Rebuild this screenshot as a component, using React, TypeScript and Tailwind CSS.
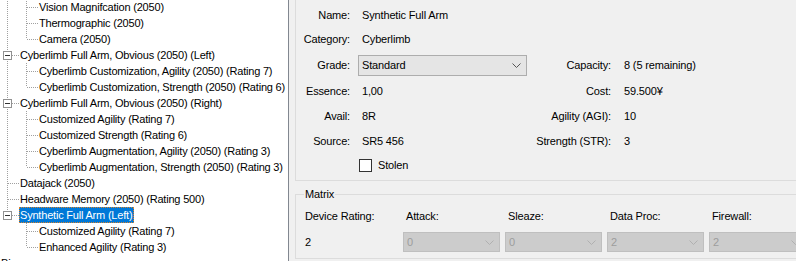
import React from "react";

type Node = {
  text: string;
  level: 0 | 1 | 2;
  last?: boolean;
  expander?: boolean;
  outer?: boolean; // level-1 line at x=7 continues through this row
  selected?: boolean;
};

const nodes: Node[] = [
  { text: "Vision Magnifcation (2050)", level: 2, outer: true },
  { text: "Thermographic (2050)", level: 2, outer: true },
  { text: "Camera (2050)", level: 2, outer: true, last: true },
  { text: "Cyberlimb Full Arm, Obvious (2050) (Left)", level: 1, expander: true },
  { text: "Cyberlimb Customization, Agility (2050) (Rating 7)", level: 2, outer: true },
  { text: "Cyberlimb Customization, Strength (2050) (Rating 6)", level: 2, outer: true, last: true },
  { text: "Cyberlimb Full Arm, Obvious (2050) (Right)", level: 1, expander: true },
  { text: "Customized Agility (Rating 7)", level: 2, outer: true },
  { text: "Customized Strength (Rating 6)", level: 2, outer: true },
  { text: "Cyberlimb Augmentation, Agility (2050) (Rating 3)", level: 2, outer: true },
  { text: "Cyberlimb Augmentation, Strength (2050) (Rating 3)", level: 2, outer: true, last: true },
  { text: "Datajack (2050)", level: 1 },
  { text: "Headware Memory (2050) (Rating 500)", level: 1 },
  { text: "Synthetic Full Arm (Left)", level: 1, expander: true, last: true, selected: true },
  { text: "Customized Agility (Rating 7)", level: 2 },
  { text: "Enhanced Agility (Rating 3)", level: 2, last: true },
  { text: "Bioware", level: 0 },
];

const LINE = "#a0a0a0";

function TreeLines({ n }: { n: Node }) {
  if (n.level === 0) return null;
  const w = n.level * 19;
  const px = n.level === 1 ? 7 : 26;
  const x = px + 0.5;
  return (
    <svg width={w} height={16} className="shrink-0 block" shapeRendering="crispEdges">
      {n.outer && (
        <line x1={7.5} y1={0} x2={7.5} y2={16} stroke={LINE} strokeDasharray="1 1" />
      )}
      <line
        x1={x}
        y1={0}
        x2={x}
        y2={n.last ? 8 : 16}
        stroke={LINE}
        strokeDasharray="1 1"
      />
      <line x1={px + (n.expander ? 5 : 1)} y1={8.5} x2={px + 12} y2={8.5} stroke={LINE} strokeDasharray="1 1" />
      {n.expander && (
        <g>
          <rect x={px - 4 + 0.5} y={4.5} width={8} height={8} fill="#ffffff" stroke="#919191" />
          <line x1={px - 2} y1={8.5} x2={px + 3} y2={8.5} stroke="#333333" />
        </g>
      )}
    </svg>
  );
}

function Tree() {
  return (
    <div className="w-[289px] h-[261px] shrink-0 bg-white border-r border-[#828790] overflow-hidden tracking-[-0.2px]">
      <div className="mt-[-1px] flex flex-col">
        {nodes.map((n, i) => (
          <div key={i} className="h-[16px] flex items-center whitespace-nowrap">
            <TreeLines n={n} />
            <span
              className={
                n.selected
                  ? "h-[16px] leading-[14px] pr-[1px] border border-dotted border-[#d9822b] bg-[#0078d7] text-white"
                  : "h-[16px] leading-[14px] pr-[1px] border border-transparent text-black"
              }
            >
              {n.text}
            </span>
          </div>
        ))}
      </div>
    </div>
  );
}

function Chevron({ color }: { color: string }) {
  return (
    <svg width="9" height="5" viewBox="0 0 9 5" className="block">
      <path d="M0.5 0.5 L4.5 4.5 L8.5 0.5" fill="none" stroke={color} strokeWidth="1" />
    </svg>
  );
}

function Label({ children, w = "w-[54px]" }: { children: React.ReactNode; w?: string }) {
  return <div className={`${w} shrink-0 text-right`}>{children}</div>;
}

function DisabledCombo({ value }: { value: string }) {
  return (
    <div className="w-[97px] h-[20px] shrink-0 bg-[#cccccc] border border-[#bfbfbf] flex items-center justify-between pl-[3px] pr-[5px] text-[#9d9d9d]">
      <span>{value}</span>
      <Chevron color="#b0b0b0" />
    </div>
  );
}

function Details() {
  return (
    <div className="flex-1 h-[261px] bg-[#f0f0f0] overflow-hidden pl-[6px] tracking-[-0.15px]">
      <div className="w-[520px] h-[181px] border-l border-b border-[#dcdcdc] pt-[3px] flex flex-col">
        <div className="h-[24px] flex items-center">
          <Label>Name:</Label>
          <div className="ml-[12px]">Synthetic Full Arm</div>
        </div>
        <div className="h-[25px] flex items-center">
          <Label>Category:</Label>
          <div className="ml-[12px]">Cyberlimb</div>
        </div>
        <div className="h-[26px] flex items-center">
          <Label>Grade:</Label>
          <div className="ml-[8px] w-[169px] h-[21px] shrink-0 bg-[#e5e5e5] border border-[#adadad] flex items-center justify-between pl-[3px] pr-[5px]">
            <span>Standard</span>
            <Chevron color="#555555" />
          </div>
          <Label w="w-[84px]">Capacity:</Label>
          <div className="ml-[13px]">8 (5 remaining)</div>
        </div>
        <div className="h-[26px] flex items-center">
          <Label>Essence:</Label>
          <div className="ml-[12px] w-[149px] shrink-0">1,00</div>
          <Label w="w-[100px]">Cost:</Label>
          <div className="ml-[13px]">59.500¥</div>
        </div>
        <div className="h-[24px] flex items-center">
          <Label>Avail:</Label>
          <div className="ml-[12px] w-[149px] shrink-0">8R</div>
          <Label w="w-[100px]">Agility (AGI):</Label>
          <div className="ml-[13px]">10</div>
        </div>
        <div className="h-[26px] flex items-center">
          <Label>Source:</Label>
          <div className="ml-[12px] w-[149px] shrink-0">SR5 456</div>
          <Label w="w-[100px]">Strength (STR):</Label>
          <div className="ml-[13px]">3</div>
        </div>
        <div className="h-[22px] flex items-center">
          <div className="w-[54px] shrink-0" />
          <div className="ml-[9px] w-[13px] h-[13px] bg-white border border-[#333333] shrink-0" />
          <div className="ml-[6px]">Stolen</div>
        </div>
      </div>

      <div className="relative mt-[13px] w-[520px] h-[65px] border-l border-t border-b border-[#dcdcdc]">
        <div className="absolute left-[8px] top-[-7px] px-[1px] leading-[13px] bg-[#f0f0f0]">Matrix</div>
        <div className="pt-[13px] flex">
          <div className="w-[107px] shrink-0 pl-[9px]">
            <div className="h-[16px] leading-[16px]">Device Rating:</div>
            <div className="mt-[8px] h-[20px] leading-[20px]">2</div>
          </div>
          {[
            ["Attack:", "0"],
            ["Sleaze:", "0"],
            ["Data Proc:", "2"],
            ["Firewall:", "2"],
          ].map(([l, v]) => (
            <div key={l} className="w-[102px] shrink-0">
              <div className="h-[16px] leading-[16px] pl-[3px]">{l}</div>
              <div className="mt-[8px]">
                <DisabledCombo value={v} />
              </div>
            </div>
          ))}
        </div>
      </div>
    </div>
  );
}

export default function App() {
  return (
    <div
      className="w-[796px] h-[261px] flex overflow-hidden text-[11px] leading-[13px] text-black"
      style={{ fontFamily: '"Liberation Sans", Arial, sans-serif' }}
    >
      <Tree />
      <Details />
    </div>
  );
}
